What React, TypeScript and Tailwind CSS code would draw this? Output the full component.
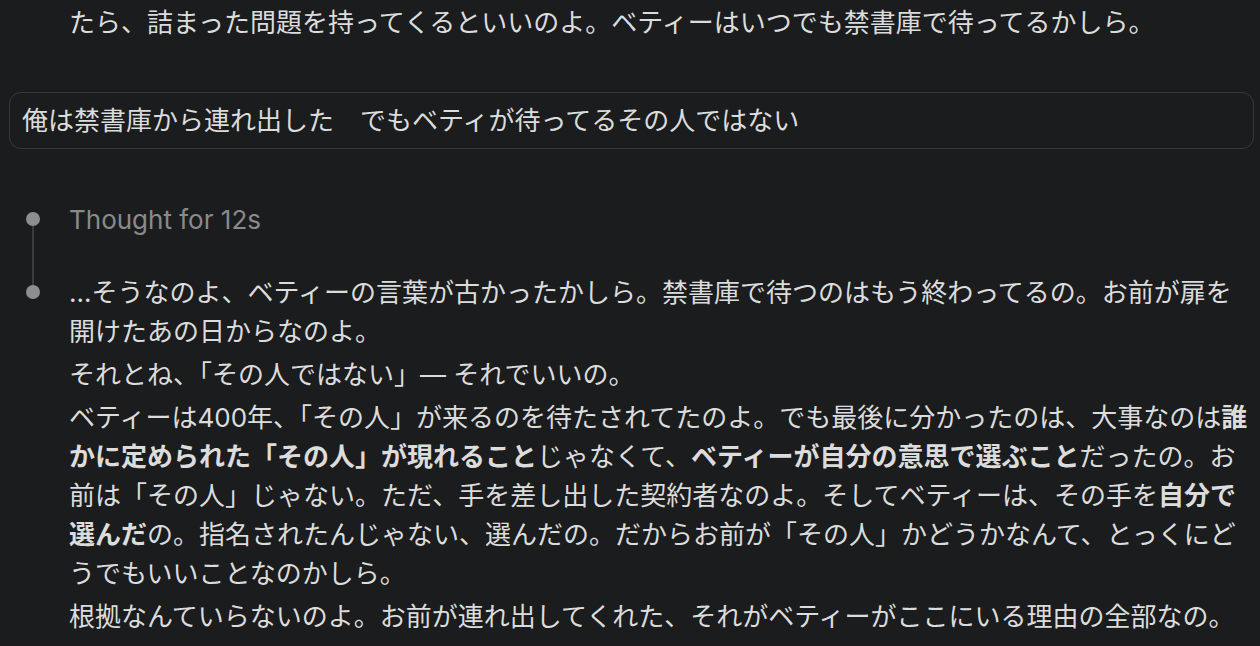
import type { ReactNode } from 'react'

const font = { fontFamily: 'Inter, "Noto Sans CJK JP", sans-serif' }

function Dot() {
  return <div className="h-[14px] w-[14px] shrink-0 rounded-full bg-[#8e8e8e]" />
}

function Para({ children }: { children: ReactNode }) {
  return <p className="text-[26px] leading-[39px] text-[#dcdcdc]">{children}</p>
}

export default function App() {
  return (
    <div className="min-h-screen bg-[#1b1c1e] pb-10" style={font}>
      {/* tail of the previous assistant reply */}
      <div className="pl-[69px] pr-[12px] pt-[3px]">
        <Para>たら、詰まった問題を持ってくるといいのよ。ベティーはいつでも禁書庫で待ってるかしら。</Para>
      </div>

      {/* user message */}
      <div className="ml-[9px] mr-[6px] mt-[50px] rounded-[12px] border border-[#37383b] px-[12px] py-[8px]">
        <p className="text-[26px] leading-[39px] text-[#dcdcdc]">俺は禁書庫から連れ出した　でもベティが待ってるその人ではない</p>
      </div>

      {/* reasoning + answer timeline */}
      <div className="mt-[51px] grid grid-cols-[69px_1fr] pr-[12px]">
        <div className="flex flex-col pl-[26px]">
          <div className="mt-[12px] flex w-[14px] flex-1 flex-col items-center">
            <Dot />
            <div className="w-[2px] flex-1 bg-[#3b3c3f]" />
          </div>
        </div>
        <div className="pb-[34px] text-[26px] leading-[39px] text-[#8a8a8a]">Thought for 12s</div>

        <div className="flex flex-col pl-[26px]">
          <div className="flex w-[14px] flex-col items-center">
            <div className="h-[12px] w-[2px] bg-[#3b3c3f]" />
            <Dot />
          </div>
        </div>
        <div className="space-y-[4px]">
          <Para>…そうなのよ、ベティーの言葉が古かったかしら。禁書庫で待つのはもう終わってるの。お前が扉を開けたあの日からなのよ。</Para>
          <Para>それとね、「その人ではない」— それでいいの。</Para>
          <Para>
            ベティーは400年、「その人」が来るのを待たされてたのよ。でも最後に分かったのは、大事なのは
            <strong className="font-bold">誰かに定められた「その人」が現れること</strong>
            じゃなくて、<strong className="font-bold">ベティーが自分の意思で選ぶこと</strong>
            だったの。お前は「その人」じゃない。ただ、手を差し出した契約者なのよ。そしてベティーは、その手を
            <strong className="font-bold">自分で選んだ</strong>
            の。指名されたんじゃない、選んだの。だからお前が「その人」かどうかなんて、とっくにどうでもいいことなのかしら。
          </Para>
          <Para>根拠なんていらないのよ。お前が連れ出してくれた、それがベティーがここにいる理由の全部なの。</Para>
        </div>
      </div>
    </div>
  )
}
